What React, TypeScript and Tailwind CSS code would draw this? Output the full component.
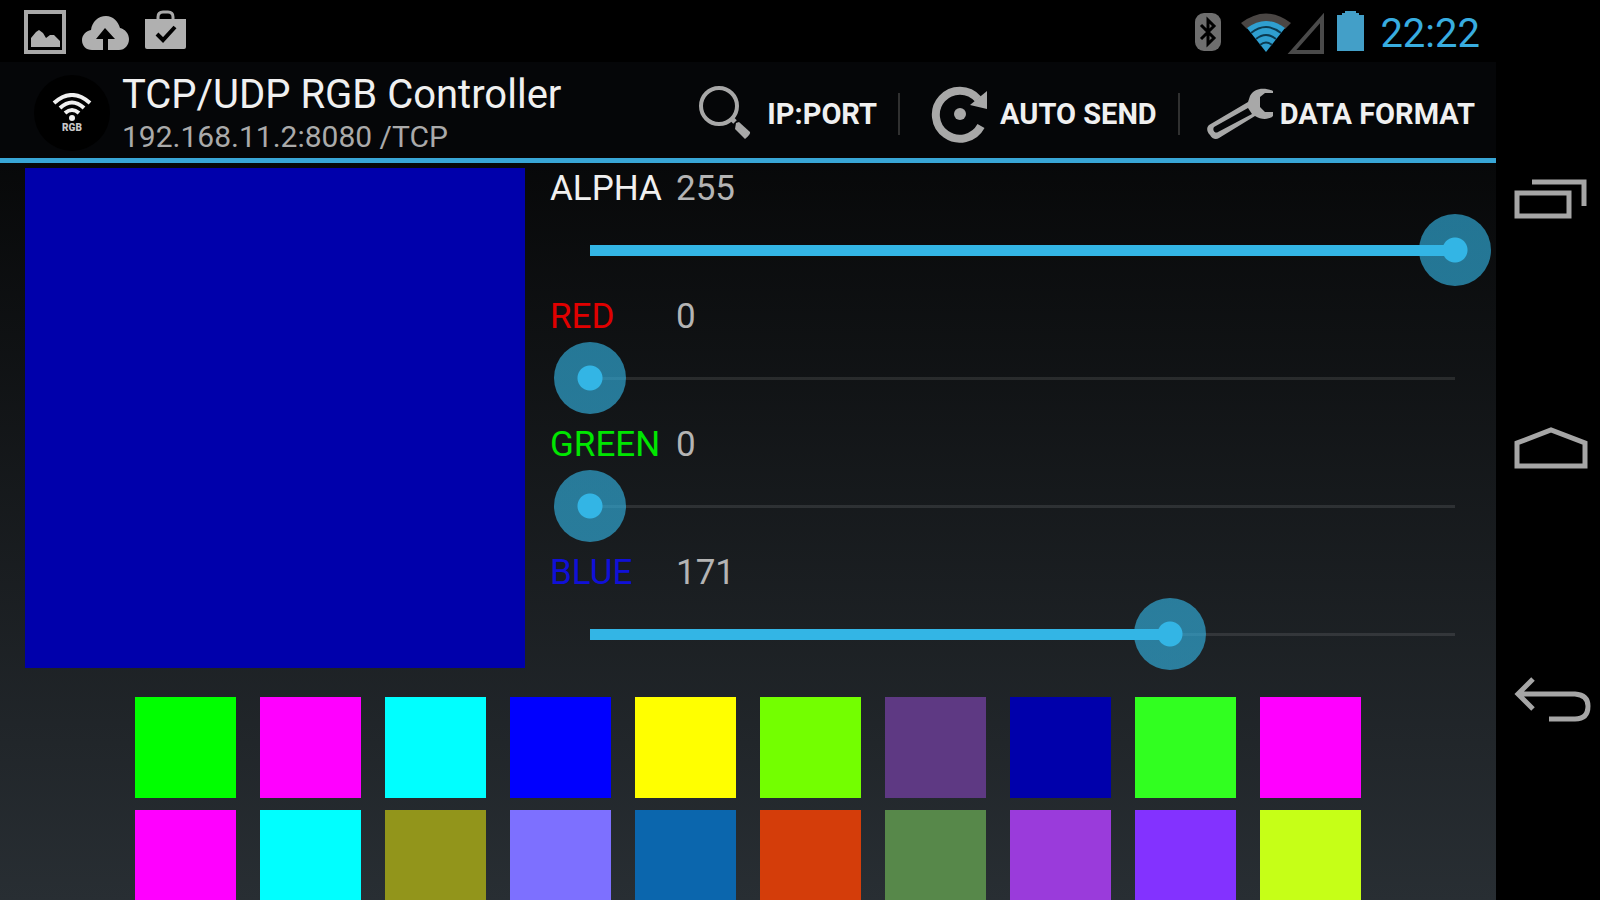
import { useState } from "react"
import type { ReactNode } from "react"

type Channel = "alpha" | "red" | "green" | "blue"

const CHANNELS: { id: Channel; label: string; color: string }[] = [
  { id: "alpha", label: "ALPHA", color: "text-[#f0f0f0]" },
  { id: "red", label: "RED", color: "text-[#e00000]" },
  { id: "green", label: "GREEN", color: "text-[#00e600]" },
  { id: "blue", label: "BLUE", color: "text-[#1010d8]" },
]

const SWATCHES = [
  "#00ff00", "#ff00ff", "#00ffff", "#0000ff", "#ffff00", "#73ff00", "#5e3983", "#0000ab", "#31ff20", "#ff00ff",
  "#ff00ff", "#00ffff", "#92951b", "#7d70ff", "#0b66ad", "#d43d0a", "#57884a", "#9a3bdb", "#8332ff", "#c6ff17",
]

function StatusBar() {
  return (
    <div className="flex h-[62px] shrink-0 items-center justify-between bg-black pl-6 pr-4 pt-[2px]">
      <div className="flex items-center gap-4">
        <svg className="h-11 w-[42px]" viewBox="0 0 42 44" aria-hidden="true">
          <rect x="2" y="2" width="38" height="40" fill="none" stroke="#a9a9a9" strokeWidth="4" />
          <path d="M7 37V28L12 22L15 20L19 23L22 28L26 25L30 25L36 31V37Z" fill="#b0b0b0" />
        </svg>
        <svg className="h-11 w-[47px]" viewBox="0 0 47 44" aria-hidden="true">
          <path
            d="M10 40C4 40 0 36 0 30C0 25 4 21 9 20C10 12 16 6 24 6C31 6 36 11 38 18C43 19 47 24 47 29C47 35 43 40 37 40H26V29H33L23 18L14 29H21V40Z"
            fill="#b0b0b0"
          />
        </svg>
        <svg className="h-11 w-[41px]" viewBox="0 0 41 44" aria-hidden="true">
          <path d="M13 10V7Q13 2 18 2H23Q28 2 28 7V10" fill="none" stroke="#a9a9a9" strokeWidth="3" />
          <path d="M0 9H41V37Q41 39 39 39H2Q0 39 0 37Z" fill="#b0b0b0" />
          <path d="M12 24L18 30L30 17" fill="none" stroke="#000" strokeWidth="4" />
        </svg>
      </div>
      <div className="flex items-center">
        <svg className="h-11 w-[26px]" viewBox="0 0 26 44" aria-hidden="true">
          <rect x="0" y="3" width="26" height="38" rx="9" fill="#6e6e6e" />
          <path d="M6 15L19 28L13 34V10L19 16L6 29" fill="none" stroke="#000" strokeWidth="3" />
        </svg>
        <svg className="ml-5 h-11 w-[84px]" viewBox="0 0 84 44" aria-hidden="true">
          <path d="M0 13Q25 -6 50 13L44 19Q25 5 6 19Z" fill="#4a4644" />
          <path d="M6 18Q25 4 44 18L25 42Z" fill="#2f9fd0" />
          <path d="M10 23Q25 11 40 23M15 29Q25 21 35 29M19 35Q25 30 31 35" fill="none" stroke="#0b3a50" strokeWidth="2" />
          <path d="M51 42L81 8V42Z" fill="none" stroke="#4a4a4a" strokeWidth="4" />
        </svg>
        <svg className="ml-3 h-11 w-[27px]" viewBox="0 0 27 44" aria-hidden="true">
          <path d="M0 5H5V3H8V1H19V3H22V5H27V41H0Z" fill="#439fc8" />
        </svg>
        <time className="ml-4 pt-1 text-[40px] leading-none text-[#38ade0]">22:22</time>
      </div>
    </div>
  )
}

function AppLogo() {
  return (
    <div className="flex size-[76px] shrink-0 flex-col items-center rounded-full bg-black pt-[18px]">
      <svg className="h-[29px] w-10" viewBox="0 0 40 29" fill="none" stroke="#f0f0f0" aria-hidden="true">
        <path d="M2 10Q20 -6 38 10M8 15Q20 4 32 15M13 20Q20 14 27 20" strokeWidth="4" />
        <circle cx="20" cy="25" r="3" fill="#f0f0f0" stroke="none" />
      </svg>
      <span className="text-[10px] font-black leading-[12px] text-[#c8c8c8]">RGB</span>
    </div>
  )
}

function ActionButton({ label, children }: { label: string; children: ReactNode }) {
  return (
    <button
      type="button"
      className="flex items-center gap-[6px] whitespace-nowrap pl-[26px] pr-[21px] text-[29px] font-bold leading-none text-[#f0f0f0]"
    >
      <svg className="h-[60px] w-[68px]" viewBox="0 0 68 60" fill="none" aria-hidden="true">
        {children}
      </svg>
      {label}
    </button>
  )
}

function Divider() {
  return <span className="h-[42px] w-[2px] bg-[#303030]" />
}

function ActionBar() {
  return (
    <header className="flex h-[101px] shrink-0 items-center justify-between border-b-[5px] border-[#38a6d6] bg-[#050608] pl-[34px] pt-[6px]">
      <div className="flex items-center gap-3">
        <AppLogo />
        <div className="whitespace-nowrap pt-1">
          <h1 className="text-[40px] leading-[44px] text-[#f0f0f0]">TCP/UDP RGB Controller</h1>
          <p className="text-[30px] leading-10 text-[#aaaaaa]">192.168.11.2:8080 /TCP</p>
        </div>
      </div>
      <div className="flex items-center pt-[2px]">
        <ActionButton label="IP:PORT">
          <circle cx="26" cy="22" r="18" stroke="#a8a8a8" strokeWidth="4" />
          <path d="M39 35L42 38" stroke="#a8a8a8" strokeWidth="5" />
          <path d="M43 39L46 38L57 48Q58 50 52 55L42 45Z" fill="#a8a8a8" />
        </ActionButton>
        <Divider />
        <ActionButton label="AUTO SEND">
          <path d="M55 42A24 24 0 1 1 52 15" stroke="#a8a8a8" strokeWidth="8" />
          <path d="M61 7V25L44 21Z" fill="#a8a8a8" />
          <circle cx="34" cy="30" r="6" fill="#a8a8a8" />
        </ActionButton>
        <Divider />
        <ActionButton label="DATA FORMAT">
          <path
            d="M67 7C58 3 48 4 44 12L42 18L3 41C0 44 1 48 4 51C6 55 10 56 13 54L49 32C55 36 63 36 67 32V28H59L54 23V13L59 9H67Z"
            fill="#a8a8a8"
          />
          <path d="M42 24L8 43C6 46 9 50 12 48L46 30Z" fill="#050608" />
        </ActionButton>
      </div>
    </header>
  )
}

function ChannelSlider({
  id,
  label,
  color,
  value,
  onChange,
}: {
  id: Channel
  label: string
  color: string
  value: number
  onChange: (value: number) => void
}) {
  return (
    <div>
      <div className="flex h-10 items-center pt-[2px] text-[35px] leading-9">
        <label htmlFor={id} className={`w-[126px] ${color}`}>
          {label}
        </label>
        <output htmlFor={id} className="text-[#b4b4b4]">
          {value}
        </output>
      </div>
      <div className="ml-1 grid h-[88px] items-center pb-1">
        <div className="col-start-1 row-start-1 mx-9 h-[3px] bg-white/10" />
        <div className="col-start-1 row-start-1 mx-9">
          <div className="h-[11px] bg-[#33b5e5]" style={{ width: `${(value / 255) * 100}%` }} />
        </div>
        <input
          id={id}
          type="range"
          min={0}
          max={255}
          value={value}
          onChange={e => onChange(Number(e.target.value))}
          className="col-start-1 row-start-1 h-[72px] w-full appearance-none bg-transparent [&::-webkit-slider-thumb]:size-[72px] [&::-webkit-slider-thumb]:appearance-none [&::-webkit-slider-thumb]:rounded-full [&::-webkit-slider-thumb]:bg-[radial-gradient(circle,#33b5e5_12px,#33b5e5a0_13px)]"
        />
      </div>
    </div>
  )
}

function NavButton({ label, d }: { label: string; d: string }) {
  return (
    <button type="button" aria-label={label} className="flex items-center justify-center">
      <svg className="h-[50px] w-20" viewBox="0 0 80 50" fill="none" stroke="#a6a6a6" strokeWidth="5" aria-hidden="true">
        <path d={d} />
      </svg>
    </button>
  )
}

export default function App() {
  const [values, setValues] = useState<Record<Channel, number>>({ alpha: 255, red: 0, green: 0, blue: 171 })
  const { alpha, red, green, blue } = values

  const pickColor = (hex: string) => {
    const n = parseInt(hex.slice(1), 16)
    setValues({ alpha: 255, red: n >> 16, green: (n >> 8) & 255, blue: n & 255 })
  }

  return (
    <div className="flex h-screen overflow-hidden bg-black font-[Roboto,sans-serif]">
      <div className="flex min-w-0 flex-1 flex-col bg-linear-to-b/srgb from-black to-[#282e33]">
        <StatusBar />
        <ActionBar />
        <main className="pt-[5px]">
          <section className="flex gap-[25px] pl-[25px] pr-[5px]">
            <div
              className="size-[500px] shrink-0"
              style={{ backgroundColor: `rgba(${red}, ${green}, ${blue}, ${alpha / 255})` }}
            />
            <div className="min-w-0 flex-1">
              {CHANNELS.map(channel => (
                <ChannelSlider
                  key={channel.id}
                  {...channel}
                  value={values[channel.id]}
                  onChange={value => setValues({ ...values, [channel.id]: value })}
                />
              ))}
            </div>
          </section>
          <section className="mt-[17px] grid grid-cols-[repeat(10,101px)] justify-center gap-x-6 gap-y-3">
            {SWATCHES.map((hex, i) => (
              <button
                key={i}
                type="button"
                aria-label={hex}
                onClick={() => pickColor(hex)}
                className="h-[101px]"
                style={{ backgroundColor: hex }}
              />
            ))}
          </section>
        </main>
      </div>
      <nav className="grid w-[104px] shrink-0 grid-rows-3 py-[75px] pl-[6px]">
        <NavButton label="Recent apps" d="M6 18H58V41H6ZM21 7H73V31" />
        <NavButton label="Home" d="M6 41V18L40 5L74 18V41Z" />
        <NavButton label="Back" d="M22 4L7 19L22 34M7 19H64Q77 20 77 31Q77 44 64 44H38" />
      </nav>
    </div>
  )
}
